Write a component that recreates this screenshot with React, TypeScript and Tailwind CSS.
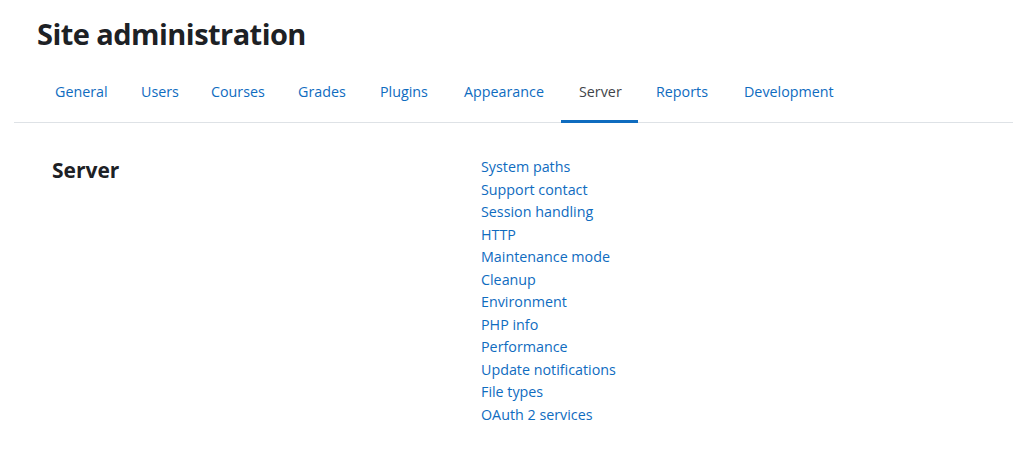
import * as React from "react";

// tab widths measured so the labels sit where the reference puts them
const tabs = [
  { label: "General", w: "w-[86px]" },
  { label: "Users", w: "w-[70px]" },
  { label: "Courses", w: "w-[87px]" },
  { label: "Grades", w: "w-[82px]" },
  { label: "Plugins", w: "w-[84px]" },
  { label: "Appearance", w: "w-[115px]" },
  { label: "Server", w: "w-[77px]" },
  { label: "Reports", w: "w-[88px]" },
  { label: "Development", w: "w-[124px]" },
];

const links = [
  "System paths",
  "Support contact",
  "Session handling",
  "HTTP",
  "Maintenance mode",
  "Cleanup",
  "Environment",
  "PHP info",
  "Performance",
  "Update notifications",
  "File types",
  "OAuth 2 services",
];

export default function App() {
  return (
    <div
      className="min-h-[452px] w-full bg-white text-[#1d2125]"
      style={{ fontFamily: '"Open Sans", "Noto Sans", sans-serif' }}
    >
      <div className="pl-[14px]">
        {/* Page heading */}
        <div className="pl-[23px] pt-[14px]">
          <h1 className="text-[29px] font-bold leading-[40px] tracking-[-0.55px]">
            Site administration
          </h1>
        </div>

        {/* Secondary navigation */}
        <nav className="mt-[18px] flex border-b border-[#dee2e6] pl-[23px]">
          {tabs.map((tab) => {
            const active = tab.label === "Server";
            return (
              <a
                key={tab.label}
                href="#"
                className={
                  active
                    ? `${tab.w} -mb-px shrink-0 whitespace-nowrap border-b-[3px] border-[#0f6cbf] pl-[18px] pt-[9px] pb-[17px] text-[14.3px] leading-[22px] text-[#3f4449]`
                    : `${tab.w} -mb-px shrink-0 whitespace-nowrap border-b-[3px] border-transparent pl-[18px] pt-[9px] pb-[17px] text-[14.3px] leading-[22px] text-[#0f6cbf]`
                }
              >
                {tab.label}
              </a>
            );
          })}
        </nav>

        {/* Category content */}
        <div className="flex items-start pt-[33px]">
          <div className="w-[467px] shrink-0 pl-[38px]">
            <h3 className="text-[21px] font-bold leading-[28px]">Server</h3>
          </div>
          <ul className="flex flex-col text-[14.3px] leading-[22.5px]">
            {links.map((link) => (
              <li key={link} className="leading-[22.5px]">
                <a href="#" className="text-[#0f6cbf]">
                  {link}
                </a>
              </li>
            ))}
          </ul>
        </div>
      </div>
    </div>
  );
}
